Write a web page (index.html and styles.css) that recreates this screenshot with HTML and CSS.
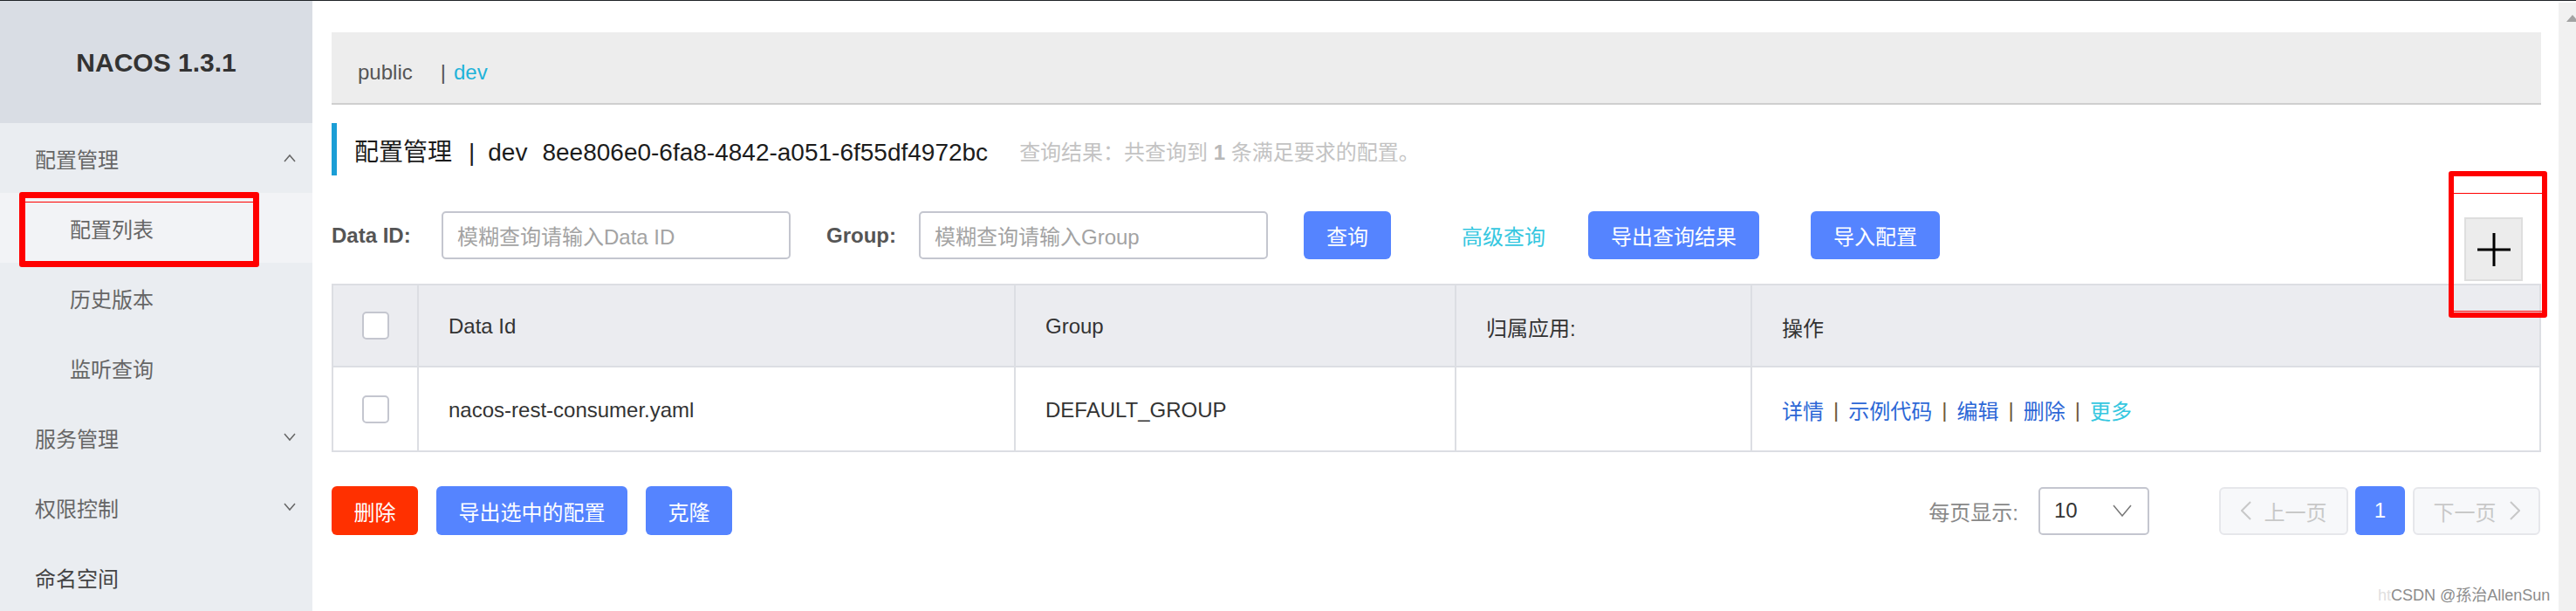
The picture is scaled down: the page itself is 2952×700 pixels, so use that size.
FILE: index.html
```html
<!DOCTYPE html>
<html lang="zh">
<head>
<meta charset="utf-8">
<title>Nacos</title>
<link rel="stylesheet" href="styles.css">
</head>
<body>
<div class="topline"></div>
<div class="app">
  <aside class="sidebar">
    <div class="logo">NACOS 1.3.1</div>
    <div class="menu-item">
      <span>配置管理</span>
      <svg class="chev" width="14" height="10" viewBox="0 0 14 10"><polyline points="1,9 7,2 13,9" fill="none" stroke="#666" stroke-width="1.5"/></svg>
    </div>
    <div class="menu-item sub active"><span>配置列表</span></div>
    <div class="menu-item sub"><span>历史版本</span></div>
    <div class="menu-item sub"><span>监听查询</span></div>
    <div class="menu-item">
      <span>服务管理</span>
      <svg class="chev" width="14" height="10" viewBox="0 0 14 10"><polyline points="1,1 7,8 13,1" fill="none" stroke="#666" stroke-width="1.5"/></svg>
    </div>
    <div class="menu-item">
      <span>权限控制</span>
      <svg class="chev" width="14" height="10" viewBox="0 0 14 10"><polyline points="1,1 7,8 13,1" fill="none" stroke="#666" stroke-width="1.5"/></svg>
    </div>
    <div class="menu-item dark"><span>命名空间</span></div>
  </aside>

  <main class="main">
    <div class="breadcrumb">
      <span class="ns">public</span>
      <span class="ns-sep">|</span>
      <span class="ns-active">dev</span>
    </div>

    <div class="title-row">
      <span class="title">配置管理<span class="title-sep">|</span>dev<span class="title-id">8ee806e0-6fa8-4842-a051-6f55df4972bc</span></span>
      <span class="summary">查询结果：共查询到 <b>1</b> 条满足要求的配置。</span>
    </div>

    <div class="search-row">
      <span class="form-label label-id">Data ID:</span>
      <div class="input"><span class="placeholder">模糊查询请输入Data ID</span></div>
      <span class="form-label label-group">Group:</span>
      <div class="input"><span class="placeholder">模糊查询请输入Group</span></div>
      <span class="btn btn-query">查询</span>
      <span class="text-btn">高级查询</span>
      <span class="btn btn-export">导出查询结果</span>
      <span class="btn btn-import">导入配置</span>
    </div>

    <div class="table">
      <div class="cell head check-cell"><span class="checkbox"></span></div>
      <div class="cell head">Data Id</div>
      <div class="cell head">Group</div>
      <div class="cell head">归属应用:</div>
      <div class="cell head last">操作</div>

      <div class="cell check-cell"><span class="checkbox"></span></div>
      <div class="cell">nacos-rest-consumer.yaml</div>
      <div class="cell">DEFAULT_GROUP</div>
      <div class="cell"></div>
      <div class="cell last">
        <span class="link">详情</span><span class="op-sep">|</span><span class="link">示例代码</span><span class="op-sep">|</span><span class="link">编辑</span><span class="op-sep">|</span><span class="link">删除</span><span class="op-sep">|</span><span class="link more">更多</span>
      </div>
    </div>

    <div class="bottom-row">
      <div class="batch">
        <span class="btn btn-danger">删除</span>
        <span class="btn">导出选中的配置</span>
        <span class="btn">克隆</span>
      </div>
      <div class="pager">
        <span class="page-size-label">每页显示:</span>
        <div class="select">
          <span>10</span>
          <svg width="22" height="14" viewBox="0 0 22 14"><polyline points="1,1 11,13 21,1" fill="none" stroke="#777" stroke-width="1.5"/></svg>
        </div>
        <span class="page-btn disabled prev">
          <svg width="12" height="22" viewBox="0 0 12 22"><polyline points="11,1 1,11 11,21" fill="none" stroke="#c8c8c8" stroke-width="2"/></svg>
          <span>上一页</span>
        </span>
        <span class="page-num">1</span>
        <span class="page-btn disabled next">
          <span>下一页</span>
          <svg width="12" height="22" viewBox="0 0 12 22"><polyline points="1,1 11,11 1,21" fill="none" stroke="#c8c8c8" stroke-width="2"/></svg>
        </span>
      </div>
    </div>
  </main>

  <div class="scrollbar"><div class="scroll-arrow"></div></div>
</div>

<div class="add-btn">
  <svg width="40" height="40" viewBox="0 0 40 40"><path d="M20 1V39M1 20H39" stroke="#000" stroke-width="3" fill="none"/></svg>
</div>
<div class="mark mark-menu"><div class="mark-line"></div></div>
<div class="mark mark-add"><div class="mark-line line-top"></div><div class="mark-line line-bottom"></div></div>
<div class="watermark"><span class="wm-faint">ht</span>CSDN @孫治AllenSun</div>
</body>
</html>
```

FILE: styles.css
```css
html, body {
  margin: 0;
  padding: 0;
}
body {
  width: 2952px;
  height: 700px;
  overflow: hidden;
  position: relative;
  background: #fff;
  font-family: "Liberation Sans", "Noto Sans CJK SC", sans-serif;
  font-size: 24px;
  color: #333;
}
.topline {
  height: 1px;
  background: #1f2327;
}
.app {
  display: flex;
  height: 699px;
}

/* sidebar */
.sidebar {
  width: 358px;
  flex: none;
  background: #eaedf1;
}
.logo {
  height: 140px;
  background: #d9dde4;
  display: flex;
  align-items: center;
  justify-content: center;
  font-weight: bold;
  font-size: 30px;
  color: #333;
  padding-top: 2px;
  box-sizing: border-box;
}
.menu-item {
  height: 80px;
  box-sizing: border-box;
  display: flex;
  align-items: center;
  justify-content: space-between;
  padding: 5px 19px 0 40px;
  color: #666;
  line-height: 1;
}
.menu-item.sub {
  padding-left: 80px;
}
.menu-item.active {
  background: #f2f3f6;
}
.menu-item.dark {
  color: #444;
}
.chev {
  display: block;
  margin-top: -5px;
}

/* main */
.main {
  flex: 1;
  min-width: 0;
  padding: 36px 20px 0 22px;
}
.breadcrumb {
  height: 83px;
  box-sizing: border-box;
  background: #ededed;
  border-bottom: 2px solid #cfcfcf;
  display: flex;
  align-items: center;
  padding: 10px 0 0 30px;
  color: #555;
}
.ns-sep {
  margin: 0 9px 0 32px;
  color: #555;
}
.ns-active {
  color: #1fb3d9;
}

.title-row {
  margin-top: 21px;
  height: 60px;
  border-left: 6px solid #1b9ed6;
  padding-left: 20px;
  display: flex;
  align-items: center;
}
.title {
  font-size: 28px;
  color: #1c1c1c;
  padding-top: 2px;
}
.title-sep {
  margin: 0 15px 0 19px;
}
.title-id {
  margin-left: 17px;
}
.summary {
  margin-left: 36px;
  color: #c3c3c3;
  padding-top: 2px;
}
.summary b {
  color: #b8b8b8;
}

.search-row {
  margin-top: 41px;
  height: 55px;
  display: flex;
  align-items: center;
}
.form-label {
  font-weight: bold;
  color: #555;
  flex: none;
}
.label-id {
  width: 126px;
}
.label-group {
  width: 106px;
  margin-left: 41px;
}
.input {
  width: 400px;
  height: 55px;
  box-sizing: border-box;
  border: 2px solid #c4c6cf;
  border-radius: 5px;
  display: flex;
  align-items: center;
  padding-left: 16px;
  flex: none;
}
.placeholder {
  color: #a3a3a3;
}
.btn {
  height: 55px;
  box-sizing: border-box;
  padding: 0 26px;
  display: inline-flex;
  align-items: center;
  justify-content: center;
  background: #5584ff;
  color: #fff;
  border-radius: 6px;
  flex: none;
}
.btn-query {
  margin-left: 41px;
}
.text-btn {
  margin-left: 81px;
  color: #35c7e0;
}
.btn-export {
  margin-left: 49px;
}
.btn-import {
  margin-left: 59px;
}

/* table */
.table {
  margin-top: 28px;
  display: grid;
  grid-template-columns: 98px 684px 505px 339px 1fr;
  border: 2px solid #dcdee3;
}
.cell {
  height: 95px;
  box-sizing: border-box;
  border-right: 2px solid #dcdee3;
  display: flex;
  align-items: center;
  padding: 2px 0 0 34px;
  color: #333;
}
.cell.head {
  height: 94px;
  background: #ebecf0;
  border-bottom: 2px solid #dcdee3;
}
.cell.last {
  border-right: none;
}
.cell.check-cell {
  padding: 0;
  justify-content: center;
}
.checkbox {
  width: 31px;
  height: 32px;
  box-sizing: border-box;
  border: 2px solid #c4c6cf;
  border-radius: 5px;
  background: #fff;
}
.link {
  color: #2c67d6;
}
.link.more {
  color: #35c7e0;
}
.op-sep {
  margin: 0 11px;
  color: #6e5a3a;
}

/* bottom */
.bottom-row {
  margin-top: 39px;
  display: flex;
  justify-content: space-between;
  align-items: center;
  height: 56px;
}
.batch {
  display: flex;
  gap: 21px;
}
.batch .btn {
  height: 56px;
  padding: 0 25.5px;
}
.btn-danger {
  background: #ff3000;
}
.pager {
  display: flex;
  align-items: center;
  margin-right: 1px;
}
.page-size-label {
  color: #888;
  margin-right: 23px;
}
.select {
  width: 127px;
  height: 55px;
  box-sizing: border-box;
  border: 2px solid #c4c6cf;
  border-radius: 5px;
  display: flex;
  align-items: center;
  justify-content: space-between;
  padding: 0 18px 0 16px;
  color: #333;
  margin-right: 80px;
}
.page-btn {
  height: 55px;
  box-sizing: border-box;
  border: 2px solid #e6e7eb;
  border-radius: 6px;
  background: #f7f8fa;
  color: #c8c8c8;
  display: flex;
  align-items: center;
  justify-content: center;
  gap: 15px;
}
.page-btn.prev {
  width: 148px;
}
.page-btn.next {
  width: 146px;
}
.page-num {
  width: 57px;
  height: 56px;
  margin: 0 9px 0 8px;
  border-radius: 6px;
  background: #5584ff;
  color: #fff;
  display: flex;
  align-items: center;
  justify-content: center;
}

/* scrollbar */
.scrollbar {
  width: 20px;
  flex: none;
  margin-top: 2px;
  background: #f1f1f1;
}
.scroll-arrow {
  margin: 14px 0 0 9px;
  width: 0;
  height: 0;
  border-left: 7px solid transparent;
  border-right: 7px solid transparent;
  border-bottom: 8px solid #a3a3a3;
}

/* overlays */
.add-btn {
  position: absolute;
  left: 2824px;
  top: 249px;
  width: 67px;
  height: 73px;
  box-sizing: border-box;
  border: 2px solid #dedede;
  background: #ececec;
  display: flex;
  align-items: center;
  justify-content: center;
}
.mark {
  position: absolute;
  box-sizing: border-box;
  border: 7px solid #ff0000;
  border-radius: 3px;
}
.mark-menu {
  left: 22px;
  top: 220px;
  width: 275px;
  height: 86px;
}
.mark-menu .mark-line {
  top: 4px;
}
.mark-add {
  left: 2806px;
  top: 196px;
  width: 113px;
  height: 168px;
  border-width: 6px;
}
.mark-line {
  position: absolute;
  left: 0;
  right: 0;
  height: 1px;
  background: #ff0000;
}
.mark-add .line-top {
  top: 19px;
}
.mark-add .line-bottom {
  bottom: 1px;
}
.watermark {
  position: absolute;
  left: 2725px;
  top: 670px;
  font-size: 18px;
  line-height: 24px;
  color: #8c8c8c;
  text-shadow: 0 0 2px #fff;
  white-space: nowrap;
}
.wm-faint {
  color: #e0e0e0;
}
```
